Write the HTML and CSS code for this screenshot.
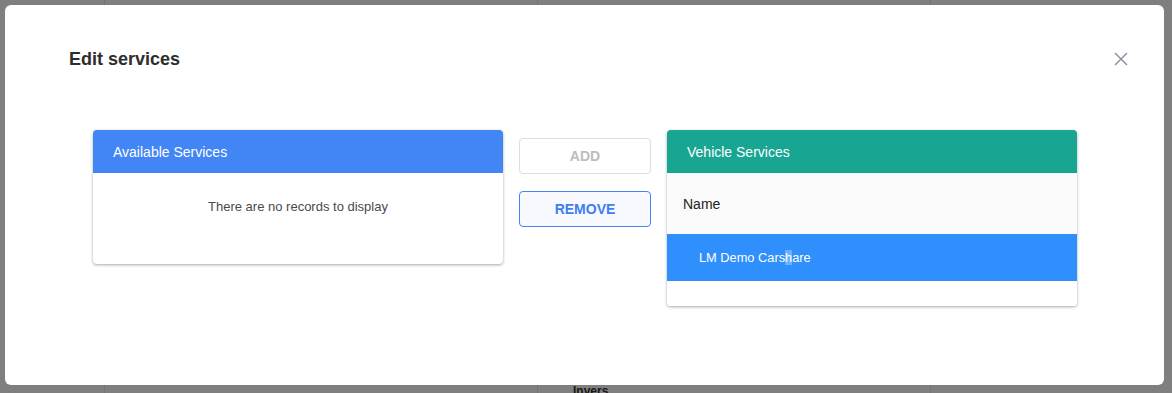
FILE: index.html
```html
<!DOCTYPE html>
<html lang="en">
<head>
    <meta charset="UTF-8">
    <meta name="viewport" content="width=device-width, initial-scale=1.0">
    <title>Edit services</title>
    <link rel="stylesheet" href="styles.css">
</head>
<body>
    <!-- page behind the dialog -->
    <div class="page">
        <div class="page-col col-a"></div>
        <div class="page-col col-b"></div>
        <div class="page-col col-c">
            <span class="page-label">Invers</span>
        </div>
        <div class="page-col col-d"></div>
    </div>

    <div class="backdrop">
        <div class="modal">
            <div class="modal-header">
                <h2 class="modal-title">Edit services</h2>
                <button class="modal-close" aria-label="Close">
                    <svg width="14" height="14" viewBox="0 0 14 14">
                        <path d="M1 1L13 13M13 1L1 13" stroke="#8b95a1" stroke-width="1.5" fill="none"/>
                    </svg>
                </button>
            </div>

            <div class="modal-body">
                <div class="card">
                    <div class="card-header blue">Available Services</div>
                    <div class="card-empty">There are no records to display</div>
                </div>

                <div class="transfer-actions">
                    <button class="btn btn-disabled">ADD</button>
                    <button class="btn btn-outline">REMOVE</button>
                </div>

                <div class="card">
                    <div class="card-header teal">Vehicle Services</div>
                    <div class="table-head">Name</div>
                    <div class="table-row selected">LM Demo Cars<span class="sel">h</span>are</div>
                    <div class="table-foot"></div>
                </div>
            </div>
        </div>
    </div>
</body>
</html>
```

FILE: styles.css
```css
* {
    margin: 0;
    padding: 0;
    box-sizing: border-box;
    font-family: 'Liberation Sans', Arial, 'Helvetica Neue', sans-serif;
}

body {
    width: 1172px;
    height: 393px;
    overflow: hidden;
    background: #ffffff;
    position: relative;
}

/* page behind */
.page {
    display: flex;
    height: 393px;
}

.page-col {
    height: 100%;
    border-right: 1px solid #e6e6e6;
    position: relative;
}

.col-a {
    width: 105px;
}

.col-b {
    width: 433px;
}

.col-c {
    width: 393px;
}

.col-d {
    flex: 1;
    border-right: none;
}

.page-label {
    position: absolute;
    left: 35px;
    top: 384px;
    font-size: 12px;
    line-height: 14px;
    font-weight: 700;
    color: #333;
}

/* dialog */
.backdrop {
    position: absolute;
    inset: 0;
    background: rgba(0, 0, 0, 0.5);
    padding: 5px 8px 8px 5px;
}

.modal {
    width: 1159px;
    height: 380px;
    background: #fff;
    border-radius: 6px;
}

.modal-header {
    display: flex;
    justify-content: space-between;
    align-items: center;
    padding: 43px 36px 0 64px;
}

.modal-title {
    font-size: 18px;
    font-weight: 700;
    line-height: 22px;
    color: #2d2d2d;
}

.modal-close {
    width: 14px;
    height: 14px;
    border: none;
    background: none;
    display: flex;
    cursor: pointer;
}

.modal-body {
    display: flex;
    align-items: flex-start;
    gap: 16px;
    padding: 60px 0 0 88px;
}

.card {
    width: 410px;
    background: #fff;
    border-radius: 4px;
    box-shadow: 0 1px 3px rgba(0, 0, 0, 0.35);
    overflow: hidden;
}

.card-header {
    height: 43px;
    display: flex;
    align-items: center;
    padding: 0 20px;
    font-size: 14px;
    color: #fff;
}

.card-header.blue {
    background: #4285f4;
}

.card-header.teal {
    background: #18a592;
}

.card-empty {
    height: 91px;
    padding-top: 26px;
    text-align: center;
    font-size: 13px;
    color: #4a4a4a;
}

.transfer-actions {
    width: 132px;
    display: flex;
    flex-direction: column;
    gap: 17px;
    padding-top: 8px;
}

.btn {
    height: 36px;
    border-radius: 4px;
    font-size: 14px;
    font-weight: 700;
    background: #fff;
}

.btn-disabled {
    border: 1px solid #dedede;
    color: #bdbdbd;
}

.btn-outline {
    border: 1px solid #4285f4;
    background: #f7f9ff;
    color: #3d7ff0;
}

.table-head {
    height: 61px;
    display: flex;
    align-items: center;
    padding: 0 16px;
    background: #fafafa;
    font-size: 14px;
    color: #222;
}

.table-row {
    height: 47px;
    display: flex;
    align-items: center;
    padding: 0 32px;
    font-size: 12.8px;
}

.table-row.selected {
    background: #2e8ffd;
    color: #fff;
}

.sel {
    background: rgba(255, 255, 255, 0.3);
}

.table-foot {
    height: 25px;
    background: #fff;
}
```
